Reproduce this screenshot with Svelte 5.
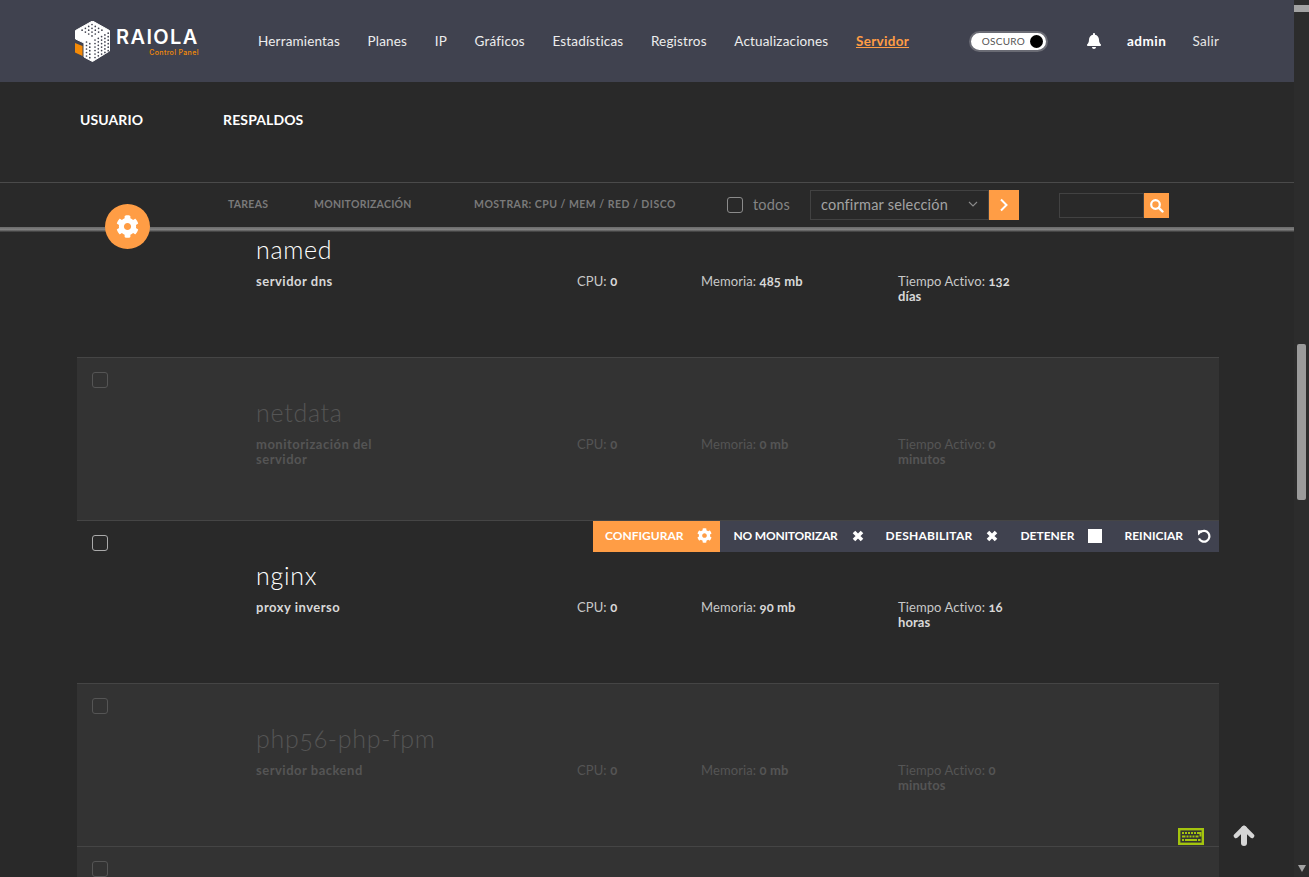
<script>
  const cog = "M487.4 315.7l-42.6-24.6c4.3-23.2 4.3-47 0-70.2l42.6-24.6c4.9-2.8 7.1-8.6 5.5-14-11.1-35.6-30-67.8-54.7-94.6-3.8-4.1-10-5.1-14.8-2.3L380.8 110c-17.9-15.4-38.5-27.3-60.8-35.1V25.8c0-5.6-3.9-10.5-9.4-11.7-36.7-8.2-74.3-7.8-109.2 0-5.5 1.2-9.4 6.1-9.4 11.7V75c-22.2 7.9-42.8 19.8-60.8 35.1L88.7 85.5c-4.9-2.8-11-1.9-14.8 2.3-24.7 26.7-43.6 58.9-54.7 94.6-1.7 5.4.6 11.2 5.5 14L67.3 221c-4.3 23.2-4.3 47 0 70.2l-42.6 24.6c-4.9 2.8-7.1 8.6-5.5 14 11.1 35.6 30 67.8 54.7 94.6 3.8 4.1 10 5.1 14.8 2.3l42.6-24.6c17.9 15.4 38.5 27.3 60.8 35.1v49.2c0 5.6 3.9 10.5 9.4 11.7 36.7 8.2 74.3 7.8 109.2 0 5.5-1.2 9.4-6.1 9.4-11.7v-49.2c22.2-7.9 42.8-19.8 60.8-35.1l42.6 24.6c4.9 2.8 11 1.9 14.8-2.3 24.7-26.7 43.6-58.9 54.7-94.6 1.5-5.5-.7-11.3-5.6-14.1zM256 336c-44.1 0-80-35.9-80-80s35.9-80 80-80 80 35.9 80 80-35.9 80-80 80z";
  const nav = ["Herramientas","Planes","IP","Gráficos","Estadísticas","Registros","Actualizaciones"];
  const rows = [
    { name:"netdata", desc:"monitorización del servidor", mem:"0 mb", up:"0", unit:"minutos", dim:true },
    { name:"nginx", desc:"proxy inverso", mem:"90 mb", up:"16", unit:"horas", dim:false, actions:true },
    { name:"php56-php-fpm", desc:"servidor backend", mem:"0 mb", up:"0", unit:"minutos", dim:true },
  ];
  const dots = [];
  // right face
  for (let i = 0; i < 5; i++) for (let j = 0; j < 6; j++) dots.push([20 + i * 3.3, 19 + j * 3.5 - i * 1.7]);
  // left face
  for (let i = 0; i < 2; i++) for (let j = 0; j < 5; j++) dots.push([11.500 + i * 3.3, 21 + j * 3.5 + i * 1.7]);
  // top face
  for (let i = 0; i < 4; i++) for (let j = 0; j < 4; j++) dots.push([17 + (i - j) * 3.3, 3.500 + (i + j) * 1.9]);
</script>

<div class="page">
  <div class="main">
    <header class="top">
      <div class="brand">
        <svg class="cube" width="35" height="41" viewBox="0 0 35 41" aria-hidden="true">
          <path d="M17.500 0 34.500 9.500V30L17.500 40.500 9 36V22L.5 18V9.500Z" fill="#fff" stroke="#fff" stroke-linejoin="round"/>
          <path d="M0 22 7.500 25V35L0 31.500Z" fill="#f58a07"/>
          {#each dots as d}<circle cx={d[0]} cy={d[1]} r="0.85" fill="#40424f"/>{/each}
        </svg>
        <div class="wordmark"><span class="wm1">RAIOLA</span><span class="wm2">Control Panel</span></div>
      </div>
      <nav class="nav">
        {#each nav as n}<a href="#top">{n}</a>{/each}
        <a href="#top" class="active">Servidor</a>
      </nav>
      <div class="toggle"><span>OSCURO</span><i></i></div>
      <svg class="bell" width="14" height="16" viewBox="0 0 448 512" aria-hidden="true"><path fill="#fff" d="M224 512c35.32 0 63.97-28.65 63.97-64H160.03c0 35.35 28.65 64 63.97 64zm215.39-149.71c-19.32-20.76-55.47-51.99-55.47-154.29 0-77.7-54.48-139.9-127.94-155.16V32c0-17.67-14.32-32-31.98-32s-31.98 14.33-31.98 32v20.84C118.56 68.1 64.08 130.3 64.08 208c0 102.3-36.15 133.53-55.47 154.29-6 6.45-8.66 14.16-8.61 21.71.11 16.4 12.98 32 32.1 32h383.8c19.12 0 32-15.6 32.1-32 .05-7.55-2.61-15.27-8.61-21.71z"/></svg>
      <b class="admin">admin</b>
      <span class="salir">Salir</span>
    </header>

    <div class="tabs"><b>USUARIO</b><b>RESPALDOS</b></div>

    <div class="toolbar">
      <span class="tl t1">TAREAS</span>
      <span class="tl t2">MONITORIZACIÓN</span>
      <span class="tl t3">MOSTRAR: CPU / MEM / RED / DISCO</span>
      <span class="box todos-box"></span>
      <span class="todos">todos</span>
      <div class="select">
        <span>confirmar selección</span>
        <svg width="10" height="6" viewBox="0 0 10 6" aria-hidden="true"><path d="M1 1l4 4 4-4" fill="none" stroke="#8b8b8b" stroke-width="1.1"/></svg>
      </div>
      <div class="go"><svg width="10" height="14" viewBox="0 0 10 14" aria-hidden="true"><path d="M2 1.500 7.500 7 2 12.500" fill="none" stroke="#fff" stroke-width="2"/></svg></div>
      <div class="search"></div>
      <div class="sbtn"><svg width="15" height="15" viewBox="0 0 15 15" aria-hidden="true"><circle cx="6.500" cy="6.500" r="4.300" fill="none" stroke="#fff" stroke-width="2.200"/><path d="M9.800 9.800 13.500 13.500" stroke="#fff" stroke-width="2.400" stroke-linecap="round"/></svg></div>
    </div>
    <div class="rule"></div>

    <div class="list">
      <div class="row first">
        <div class="text">
          <h2>named</h2>
          <div class="cols">
            <b class="desc">servidor dns</b>
            <span class="cpu">CPU: <b>0</b></span>
            <span class="mem">Memoria: <b>485 mb</b></span>
            <span class="up">Tiempo Activo: <b>132</b><br><b>días</b></span>
          </div>
        </div>
      </div>
      {#each rows as r}
        <div class="row" class:dim={r.dim}>
          <span class="box"></span>
          <div class="text">
            <h2>{r.name}</h2>
            <div class="cols">
              <b class="desc">{r.desc}</b>
              <span class="cpu">CPU: <b>0</b></span>
              <span class="mem">Memoria: <b>{r.mem}</b></span>
              <span class="up">Tiempo Activo: <b>{r.up}</b><br><b>{r.unit}</b></span>
            </div>
          </div>
          {#if r.actions}
            <div class="actions">
              <span class="act on">CONFIGURAR <svg width="15" height="15" viewBox="0 0 512 512" aria-hidden="true"><path fill="#fff" d={cog}/></svg></span>
              <span class="act nm">NO MONITORIZAR <svg width="12" height="12" viewBox="0 0 12 12" aria-hidden="true"><path d="M2 2l8 8M10 2l-8 8" stroke="#fff" stroke-width="3.600"/></svg></span>
              <span class="act dh">DESHABILITAR <svg width="12" height="12" viewBox="0 0 12 12" aria-hidden="true"><path d="M2 2l8 8M10 2l-8 8" stroke="#fff" stroke-width="3.600"/></svg></span>
              <span class="act">DETENER <i class="stop"></i></span>
              <span class="act">REINICIAR <svg width="14" height="14" viewBox="0 0 14 14" aria-hidden="true"><path d="M3.400 3.200A5.400 5.400 0 1 1 2 9.400" fill="none" stroke="#fff" stroke-width="2.200"/><path d="M.8 1.200 6.200 1.400 1.200 6.400Z" fill="#fff"/></svg></span>
            </div>
          {/if}
        </div>
      {/each}
      <div class="row dim last"><span class="box"></span></div>
    </div>

    <div class="cog-btn"><svg width="23" height="23" viewBox="0 0 512 512" aria-hidden="true"><path fill="#fff" d={cog}/></svg></div>
    <svg class="kbd" width="26" height="17" viewBox="0 0 26 17" aria-hidden="true">
      <rect x="1.200" y="1.200" width="23.600" height="14.600" fill="none" stroke="#a4c40e" stroke-width="2.400"/>
      <path d="M4 5h2M7 5h2M10 5h2M13 5h2M16 5h2M19 5h3.500v3.500M4 8.500h3.500M8.500 8.500h2M11.500 8.500h2M14.500 8.500h2M17.500 8.500h3M4 12h2M7 12h12M20 12h2.500" stroke="#a4c40e" stroke-width="2" fill="none"/>
    </svg>
    <svg class="up-arrow" width="22" height="21" viewBox="0 0 22 21" aria-hidden="true"><path d="M11 3 3 10.800M11 3l8 7.800" stroke="#d6d6d6" stroke-width="4.600" stroke-linecap="round" fill="none"/><path d="M11 4V18" stroke="#d6d6d6" stroke-width="6" stroke-linecap="round"/></svg>
  </div>

  <aside class="bar">
    <i class="tri up"></i>
    <i class="thumb"></i>
    <i class="tri down"></i>
  </aside>
</div>

<style>
  :global(body) { margin: 0; background: #292929; }
  .page { display: flex; height: 877px; width: 1309px; overflow: hidden; font-family: "Lato", "Open Sans", sans-serif; font-variant-numeric: oldstyle-nums; color: #e6e6e6; }
  .main { position: relative; width: 1294px; flex: none; display: flex; flex-direction: column; height: 877px; overflow: hidden; }
  .bar { width: 15px; flex: none; background: #2c2c2c; display: flex; flex-direction: column; align-items: center; padding-top: 5px; box-sizing: border-box; height: 877px; }
  .tri { width: 0; height: 0; border-left: 4.5px solid transparent; border-right: 4.5px solid transparent; }
  .tri.up { border-bottom: 7px solid #a3a3a3; }
  .tri.down { border-top: 7px solid #a3a3a3; margin-top: 365px; }
  .thumb { width: 9px; height: 156px; background: #9b9b9b; margin-top: 332px; border-radius: 2px; }

  .top { height: 82px; flex: none; background: #40424f; display: flex; align-items: center; box-sizing: border-box; padding-left: 75px; font-size: 13.5px; }
  .brand { display: flex; align-items: center; gap: 6px; width: 183px; flex: none; }
  .wordmark { display: flex; flex-direction: column; margin-top: 2px; }
  .wm1 { font-family: "Inter", sans-serif; font-size: 20px; font-weight: 600; letter-spacing: 1.4px; line-height: 20px; color: #fff; }
  .wm2 { font-family: "Inter", sans-serif; font-size: 7px; line-height: 8px; letter-spacing: .35px; color: #f58a07; align-self: flex-end; font-weight: 500; margin-top: 2px; }
  .nav { display: flex; gap: 27.6px; width: 712px; flex: none; }
  .nav a { color: #ededed; text-decoration: none; letter-spacing: .17px; }
  .nav a.active { color: #ff9d45; font-weight: 700; text-decoration: underline; letter-spacing: .3px; }
  .toggle { height: 17px; border: 2px solid #6a6b74; border-radius: 11px; background: #fff; display: flex; align-items: center; justify-content: flex-end; gap: 5px; padding-right: 3px; box-sizing: content-box; font-size: 10px; letter-spacing: .25px; color: #555; margin-right: 39px; margin-left: -1px; flex: none; width: 72px; }
  .toggle i { width: 13px; height: 13px; background: #000; border-radius: 50%; }
  .bell { flex: none; margin-right: 26px; }
  .admin { color: #fff; font-weight: 700; margin-right: 26px; letter-spacing: .5px; }
  .salir { color: #e6e6e6; letter-spacing: .3px; }

  .tabs { height: 101px; flex: none; display: flex; gap: 80px; box-sizing: border-box; padding: 29px 0 0 80px; border-bottom: 1px solid #4a4a4a; font-size: 14px; letter-spacing: .1px; color: #fff; line-height: 18px; }
  .toolbar { height: 44px; flex: none; display: flex; align-items: center; position: relative; box-sizing: border-box; padding-left: 228px; }
  .tl { font-size: 10.5px; font-weight: 700; color: #7a7a7a; letter-spacing: .25px; margin-top: -2px; }
  .t1 { width: 86px; } .t2 { width: 160px; } .t3 { width: 253px; letter-spacing: .48px; }
  .box { width: 14px; height: 14px; border: 1.5px solid #8b8b8b; border-radius: 3px; display: block; flex: none; box-sizing: content-box; }
  .todos { color: #858585; font-size: 14.5px; margin: 0 20px 0 10px; width: 37px; letter-spacing: .2px; padding-bottom: 1px; }
  .select { width: 179px; height: 30px; border: 1px solid #424242; display: flex; align-items: center; justify-content: space-between; box-sizing: border-box; padding: 0 10px 2px; font-size: 14.5px; color: #a3a3a3; letter-spacing: .2px; }
  .go { width: 30px; height: 30px; background: #ff9d45; display: flex; align-items: center; justify-content: center; margin-right: 40px; }
  .search { width: 85px; height: 25px; border: 1px solid #424242; box-sizing: border-box; }
  .sbtn { width: 25px; height: 25px; background: #ff9d45; display: flex; align-items: center; justify-content: center; }
  .rule { height: 5px; flex: none; background: linear-gradient(#6a6a6a, #7f7f7f 50%, #5f5f5f 75%, #333); }

  .list { margin: 0 75px 0 77px; flex: 1; min-height: 0; }
  .row { height: 163px; position: relative; box-sizing: border-box; border-bottom: 1px solid #454545; padding: 39px 0 0 179px; }
  .row.first { height: 126px; padding-top: 2px; }
  .row.dim { background: #333; color: #555; }
  .row > .box { position: absolute; left: 15px; top: 14px; border-color: #aaa; }
  .row.dim > .box { border-color: #555; }
  h2 { font-weight: 300; font-size: 25px; line-height: 30px; margin: 0; color: #fff; letter-spacing: .7px; }
  .dim h2 { color: #555; }
  .cols { display: grid; grid-template-columns: 321px 124px 197px 125px; font-size: 13px; line-height: 15px; margin-top: 10px; letter-spacing: .1px; color: #c8c8c8; }
  .desc { max-width: 140px; letter-spacing: .5px; }
  .cols b { font-weight: 700; color: #d8d8d8; }
  .dim .cols, .dim .cols b { color: #555; }
  .up { width: 125px; }

  .actions { position: absolute; right: 0; top: 0; height: 31px; background: #40424f; display: flex; color: #fff; font-size: 12px; font-weight: 700; }
  .act { display: flex; align-items: center; gap: 14px; padding: 0 8px 2px 14px; }
  .act.on { background: #ff9d45; padding: 0 8px 2px 12px; gap: 13px; }
  .act.nm { letter-spacing: -.2px; }
  .act.dh { letter-spacing: .25px; }
  .stop { width: 14px; height: 14px; background: #fff; display: block; }

  .cog-btn { position: absolute; left: 105px; top: 204px; width: 45px; height: 45px; border-radius: 50%; background: #ff9d45; display: flex; align-items: center; justify-content: center; }
  .kbd { position: absolute; left: 1178px; top: 828px; }
  .up-arrow { position: absolute; left: 1233px; top: 825px; }
</style>
